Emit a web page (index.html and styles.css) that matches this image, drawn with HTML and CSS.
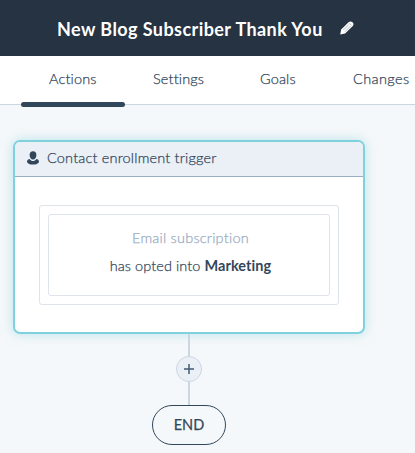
FILE: index.html
```
<!DOCTYPE html>
<html lang="en">
<head>
<meta charset="UTF-8">
<title>New Blog Subscriber Thank You</title>
<link rel="stylesheet" href="styles.css">
</head>
<body>
<header class="header">
	<h1 class="title">New Blog Subscriber Thank You</h1>
	<svg class="edit" width="14" height="14" viewBox="0 0 14 14">
		<path d="M0.2 13.4L1.2 8.6L8.8 1.1Q10.6 -0.4 12.5 1.3Q14.3 3.2 12.8 5L5.1 12.4Z" fill="#fff"/>
		<path d="M3.4 9L8.9 3.5M5 10.6L10.5 5.1" stroke="#7c8b9b" stroke-width="0.6"/>
		<path d="M9.3 2.1L11.8 4.6" stroke="#7c8b9b" stroke-width="0.6"/>
	</svg>
</header>
<nav class="tabs">
	<a class="tab tab-actions active">Actions</a>
	<a class="tab tab-settings">Settings</a>
	<a class="tab tab-goals">Goals</a>
	<a class="tab tab-changes">Changes</a>
</nav>
<main class="flow">
	<section class="card">
		<div class="card-header">
			<svg class="user" width="12" height="14" viewBox="0 0 12 14">
				<path d="M6 0.2C8.2 0.2 9.4 1.8 9.4 4C9.4 6.4 8 8.6 6 8.6C4 8.6 2.6 6.4 2.6 4C2.6 1.8 3.8 0.2 6 0.2Z" fill="#33475b"/>
				<path d="M2.6 7.9C3.6 9.4 4.7 10 6 10C7.3 10 8.4 9.4 9.4 7.9C11 8.2 12 9.2 12 10.5C12 12.5 9.2 13.6 6 13.6C2.8 13.6 0 12.5 0 10.5C0 9.2 1 8.2 2.6 7.9Z" fill="#33475b"/>
			</svg>
			<span class="card-title">Contact enrollment trigger</span>
		</div>
		<div class="card-body">
			<div class="group">
				<div class="filter">
					<p class="filter-name">Email subscription</p>
					<p class="filter-rule">has opted into <b>Marketing</b></p>
				</div>
			</div>
		</div>
	</section>
	<div class="line"></div>
	<div class="add">
		<svg width="10" height="10" viewBox="0 0 10 10">
			<path d="M5 0V10M0 5H10" stroke="#425b76" stroke-width="1.5"/>
		</svg>
	</div>
	<div class="line line-end"></div>
	<div class="end">END</div>
</main>
</body>
</html>
```

FILE: styles.css
```
*{
	box-sizing: border-box;
}
body{
	margin: 0;
	height: 453px;
	overflow: hidden;
	background: #f5f8fa;
	color: #33475b;
	font-family: Lato, "Liberation Sans", sans-serif;
	font-size: 14.5px;
	font-weight: 300;
	font-variant-ligatures: none;
	-webkit-text-stroke: 0.25px;
}
p,h1{
	margin: 0;
}
.header{
	height: 56px;
	padding: 2px 0 0 57px;
	display: flex;
	align-items: center;
	background: #253342;
	color: #fff;
}
.title{
	width: 266px;
	font-size: 18px;
	line-height: 24px;
	font-weight: 700;
	letter-spacing: 0.43px;
	white-space: nowrap;
	-webkit-text-stroke: 0;
}
.edit{
	margin: -2px 0 0 17px;
}
.tabs{
	height: 49px;
	padding-left: 21px;
	display: flex;
	background: #fff;
	border-bottom: 1px solid #cbd6e2;
}
.tab{
	flex: none;
	height: 51px;
	padding-left: 28px;
	line-height: 46px;
	letter-spacing: 0.15px;
	white-space: nowrap;
}
.tab-actions{
	width: 104px;
}
.tab-settings{
	width: 107px;
}
.tab-goals{
	width: 93px;
}
.tab-changes{
	letter-spacing: 0.4px;
}
.tab.active{
	position: relative;
}
.active::after{
	content: "";
	position: absolute;
	left: 0;
	bottom: 0;
	width: 104px;
	height: 5px;
	border-radius: 3px;
	background: #33475b;
}
.flow{
	width: 352px;
	margin: 35px 0 0 13px;
	display: flex;
	flex-direction: column;
	align-items: center;
}
.card{
	width: 352px;
	height: 194px;
	border: 2px solid #7fd1de;
	border-radius: 7px;
	background: #fff;
	box-shadow: 0 0 12px rgba(127,209,222,0.5);
}
.card-header{
	height: 35px;
	padding-left: 12px;
	display: flex;
	align-items: center;
	gap: 8px;
	background: #eaf0f6;
	border-bottom: 1px solid #99acc2;
	border-radius: 5px 5px 0 0;
}
.user{
	margin-top: -2px;
}
.card-title{
	margin-top: -3px;
	letter-spacing: 0.18px;
}
.card-body{
	padding: 28px 24px;
}
.group{
	height: 100px;
	padding: 8px;
	border: 1px solid #dfe3eb;
	border-radius: 3px;
}
.filter{
	height: 82px;
	padding-top: 9px;
	border: 1px solid #dfe3eb;
	border-radius: 3px;
	text-align: center;
	line-height: 28px;
	letter-spacing: 0.22px;
}
.filter-name{
	padding-left: 3px;
	color: #99acc2;
}
.filter-rule{
	padding-left: 3px;
	letter-spacing: 0.07px;
}
.filter-rule b{
	font-weight: 700;
	-webkit-text-stroke: 0;
}
.line{
	width: 2px;
	height: 22px;
	background: #cbd6e2;
}
.line-end{
	height: 23px;
}
.add{
	width: 26px;
	height: 26px;
	display: flex;
	align-items: center;
	justify-content: center;
	border: 1px solid #cbd6e2;
	border-radius: 50%;
	background: #eaf0f6;
}
.end{
	width: 74px;
	height: 40px;
	border: 1px solid #33475b;
	border-radius: 20px;
	font-weight: 400;
	line-height: 38px;
	text-align: center;
}
```
